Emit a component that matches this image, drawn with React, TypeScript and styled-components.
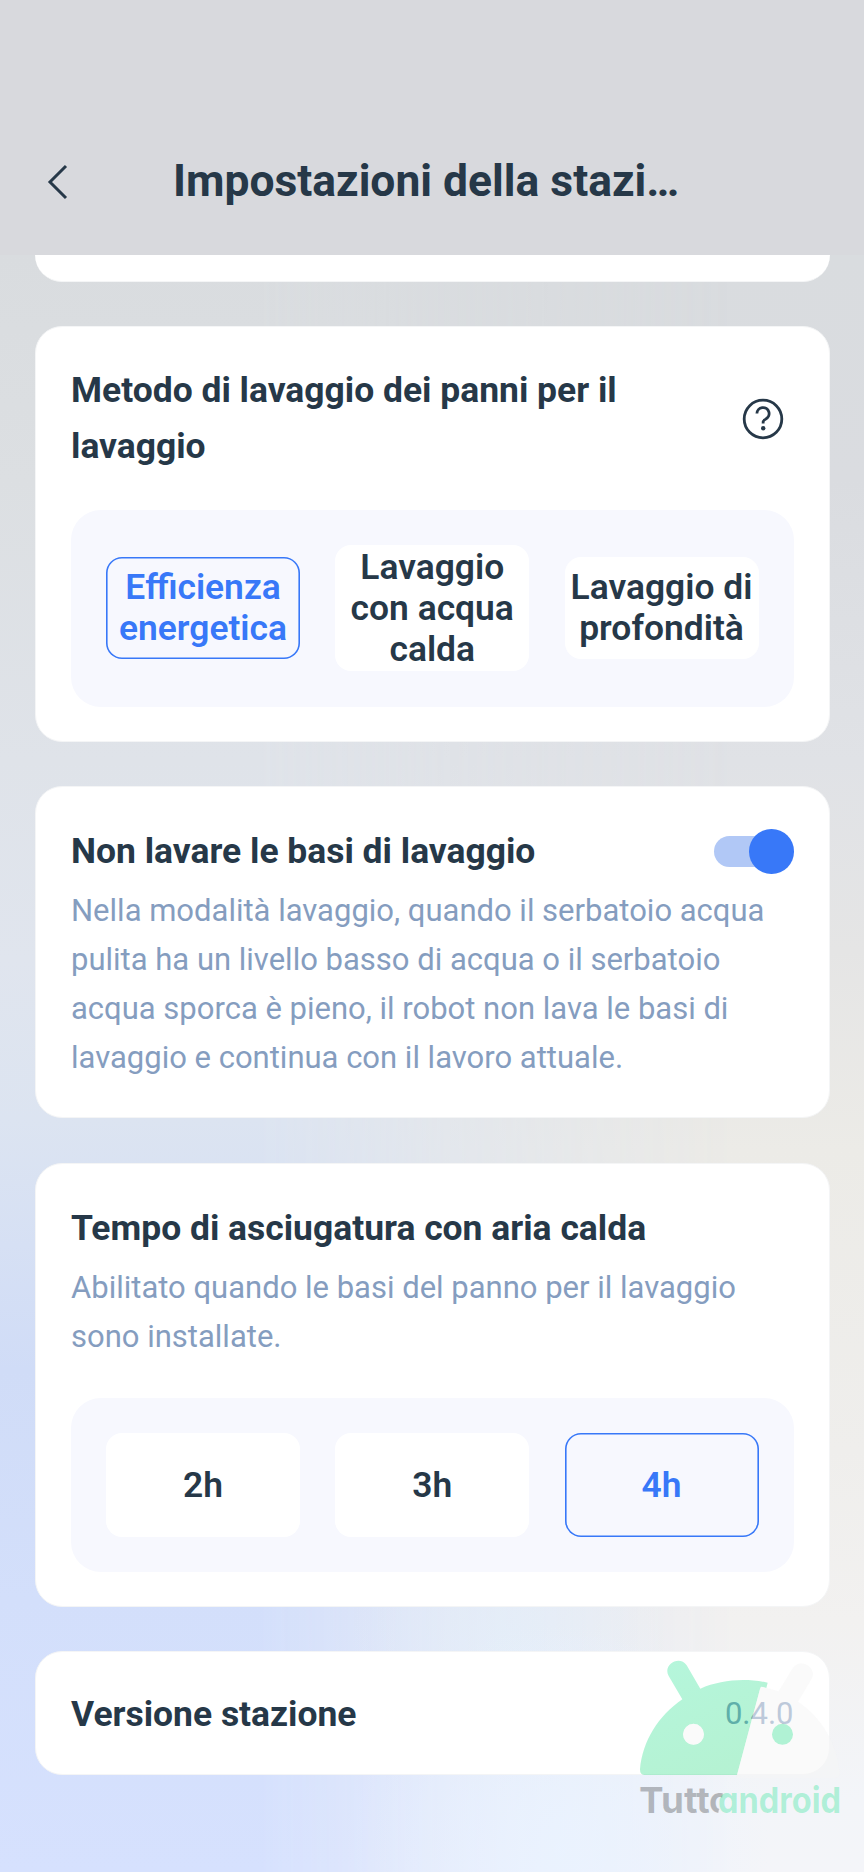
import React from 'react';
import styled, { createGlobalStyle } from 'styled-components';

const ink = '#263848';
const blue = '#3878f8';

const GlobalStyle = createGlobalStyle`
  html, body { margin: 0; padding: 0; }
  body { font-family: Roboto, "Liberation Sans", sans-serif; color: ${ink}; }
  * { box-sizing: border-box; }
`;

const Screen = styled.main`
  position: relative;
  isolation: isolate;
  width: 864px;
  height: 1872px;
  overflow: hidden;
  background: linear-gradient(180deg, #d8d9dc 0, #d9dcdf 255px, #dadce0 480px, #e0e2e6 760px, #e5e5e5 950px, #ecebe7 1150px, #efeeec 1450px, #f2f1f0 1620px, #f3f5f9 1800px, #f4f5f9 1872px);

  &::before {
    content: '';
    position: absolute;
    inset: 0;
    z-index: -1;
    background: linear-gradient(180deg, #d8d9dc 0, #d9dcdf 255px, #dcdfe2 480px, #dfe3e9 760px, #e0e5ee 960px, #dce4f1 1120px, #d0dcf7 1370px, #d3dffb 1600px, #d6e1fe 1872px);
    mask-image: linear-gradient(90deg, #000 0%, #000 30%, rgba(0,0,0,.5) 52%, transparent 85%);
  }

  &::after {
    content: '';
    position: absolute;
    inset: 0;
    z-index: -1;
    background:
      radial-gradient(ellipse 210px 230px at 560px 1850px, rgba(234,243,255,.9), rgba(234,243,255,0)),
      radial-gradient(ellipse 160px 150px at 510px 1640px, rgba(228,239,250,.7), rgba(228,239,250,0));
  }
`;

const Header = styled.header`
  height: 255px;
  padding: 152px 0 0 35px;
  display: flex;
  align-items: flex-start;
  background: #d8d9dd;
`;

const BackButton = styled.button`
  width: 44px;
  height: 44px;
  padding: 0;
  border: 0;
  background: none;
  display: grid;
  place-items: center;
  margin-top: 8px;
`;

const Title = styled.h1`
  margin: -1px 0 0 94px;
  width: 520px;
  font-size: 44.4px;
  line-height: 60px;
  font-weight: 700;
  white-space: nowrap;
`;

const Content = styled.div`
  padding: 0 34.5px 0 35px;
  display: flex;
  flex-direction: column;
`;

const Card = styled.section<{ $height: number; $top?: number }>`
  height: ${p => p.$height}px;
  margin-bottom: 44.3px;
  padding: ${p => p.$top ?? 35}px 35px 0 35px;
  border: 1px solid #f4f5f6;
  border-radius: 27px;
  background: #fff;
`;

const CardTail = styled.div`
  height: 27px;
  margin-bottom: 44px;
  border-radius: 0 0 27px 27px;
  border-bottom: 1px solid #f4f5f6;
  background: #fff;
`;

const Row = styled.div`
  display: flex;
  align-items: center;
  justify-content: space-between;
`;

const Heading = styled.h2`
  margin: 0;
  max-width: 590px;
  font-size: 35.45px;
  line-height: 56px;
  font-weight: 700;
`;

const Description = styled.p`
  margin: 8.5px 0 0;
  font-size: 31px;
  line-height: 48.7px;
  color: #859dbf;
`;

const HelpButton = styled.button`
  width: 42px;
  height: 42px;
  padding: 0;
  margin: 2px 10px 0 0;
  border: 0;
  background: none;
`;

const OptionPanel = styled.div<{ $height: number; $top: number }>`
  height: ${p => p.$height}px;
  margin-top: ${p => p.$top}px;
  padding: 0 35px;
  border-radius: 30px;
  background: #f7f8fe;
  display: grid;
  grid-template-columns: repeat(3, 194px);
  justify-content: space-between;
  align-items: center;
`;

const Option = styled.button<{ $active?: boolean; $height?: number }>`
  height: ${p => p.$height ?? 102}px;
  padding: 0;
  border: 0;
  box-shadow: ${p => (p.$active ? `inset 0 0 0 1.6px ${blue}` : 'none')};
  border-radius: 16px;
  background: ${p => (p.$active ? 'transparent' : '#fff')};
  color: ${p => (p.$active ? blue : ink)};
  font: 600 35.4px/41px Roboto, "Liberation Sans", sans-serif;
  text-align: center;
  white-space: pre;
`;

const Switch = styled.button`
  width: 80px;
  height: 45px;
  padding: 0;
  margin-top: 1px;
  border: 0;
  background: none;
  display: flex;
  align-items: center;
`;

const Track = styled.span`
  width: 66px;
  height: 31px;
  border-radius: 16px;
  background: #b1c8f6;
`;

const Knob = styled.span`
  width: 44.5px;
  height: 44.5px;
  margin-left: -30.5px;
  border-radius: 50%;
  background: ${blue};
`;

const Version = styled.span`
  margin-top: -1px;
  font-size: 31px;
  line-height: 40px;
  color: #859dbf;
`;

const Watermark = styled.svg`
  position: absolute;
  left: 600px;
  top: 1620px;
  width: 264px;
  height: 252px;
  pointer-events: none;
`;

const Wordmark = styled.text`
  font: 700 106px Inter, Lato, sans-serif;
  font-feature-settings: 'cv11' 1;
`;

const BackIcon = () => (
  <svg width="44" height="44" viewBox="0 0 44 44" fill="none" stroke={ink} strokeWidth="3">
    <path d="M31 6 15 22 31 38" />
  </svg>
);

const HelpIcon = () => (
  <svg width="42" height="42" viewBox="0 0 42 42" fill="none" stroke={ink} strokeWidth="2.8">
    <circle cx="21" cy="21" r="18.8" />
    <path d="M14.900 15.600a6.100 6.100 0 1 1 8.600 5.600C21.800 21.900 21.100 22.400 21.100 25.400" />
    <circle cx="21.200" cy="30.300" r="2.200" fill={ink} stroke="none" />
  </svg>
);

const TuttoAndroid = () => (
  <Watermark viewBox="0 0 792 756">
    <defs>
      <linearGradient id="mint" x1="0" y1="0" x2="0.5" y2="1">
        <stop offset="0" stopColor="#08e28a" />
        <stop offset="1" stopColor="#08d46c" />
      </linearGradient>
      <linearGradient id="greyCut" gradientUnits="userSpaceOnUse" x1="360" y1="548" x2="364" y2="549">
        <stop offset="0" stopColor="#000" stopOpacity=".26" />
        <stop offset="1" stopColor="#000" stopOpacity="0" />
      </linearGradient>
    </defs>
    <path
      opacity=".3"
      fill="url(#mint)"
      fillRule="evenodd"
      d="M247 238 206 168C187 135 238 103 260 136L301 206C361 180 433 173 503 188L499 204 485 200Q482 200 480 207L411 465H133Q120 465 120 448C128 363 174 288 247 238ZM312 343A31.500 31.500 0 1 0 249 343A31.500 31.500 0 1 0 312 343Z"
    />
    <circle cx="280.500" cy="343" r="31.500" fill="#f5f5f5" opacity=".45" />
    <path
      opacity=".5"
      fill="#f5f5f5"
      fillRule="evenodd"
      d="M480 207Q482 200 485 200L536 214 577 146C600 110 655 143 634 178L594 245C664 292 709 365 719 457Q720 474 705 474H409L411 465ZM579 343A31.500 31.500 0 1 0 516 343A31.500 31.500 0 1 0 579 343Z"
    />
    <circle cx="547.500" cy="343" r="31.500" fill="#08d879" opacity=".32" />
    <Wordmark y="580">
      <tspan x="117" fill="#000" fillOpacity=".26" textLength="212" lengthAdjust="spacingAndGlyphs">Tutt</tspan>
      <tspan x="327" fill="url(#greyCut)">o</tspan>
      <tspan x="354" fill="#08e285" fillOpacity=".3" textLength="369" lengthAdjust="spacingAndGlyphs">android</tspan>
    </Wordmark>
  </Watermark>
);

export default function App() {
  return (
    <>
      <GlobalStyle />
      <Screen>
        <Header>
          <BackButton aria-label="Indietro"><BackIcon /></BackButton>
          <Title>Impostazioni della stazi…</Title>
        </Header>
        <Content>
          <CardTail />
          <Card $height={415.7}>
            <Row>
              <Heading>Metodo di lavaggio dei panni per il lavaggio</Heading>
              <HelpButton aria-label="Aiuto"><HelpIcon /></HelpButton>
            </Row>
            <OptionPanel $height={196.5} $top={36}>
              <Option $active>{'Efficienza\nenergetica'}</Option>
              <Option $height={126}>{'Lavaggio\ncon acqua\ncalda'}</Option>
              <Option>{'Lavaggio di\nprofondità'}</Option>
            </OptionPanel>
          </Card>
          <Card $height={332.3} $top={36}>
            <Row>
              <Heading>Non lavare le basi di lavaggio</Heading>
              <Switch role="switch" aria-checked="true" aria-label="Non lavare le basi di lavaggio"><Track /><Knob /></Switch>
            </Row>
            <Description>Nella modalità lavaggio, quando il serbatoio acqua pulita ha un livello basso di acqua o il serbatoio acqua sporca è pieno, il robot non lava le basi di lavaggio e continua con il lavoro attuale.</Description>
          </Card>
          <Card $height={444.2} $top={36}>
            <Heading>Tempo di asciugatura con aria calda</Heading>
            <Description>Abilitato quando le basi del panno per il lavaggio sono installate.</Description>
            <OptionPanel $height={174.3} $top={36.5}>
              <Option $height={103.5}>2h</Option>
              <Option $height={103.5}>3h</Option>
              <Option $active $height={103.5}>4h</Option>
            </OptionPanel>
          </Card>
          <Card $height={124} $top={34}>
            <Row>
              <Heading>Versione stazione</Heading>
              <Version>0.4.0</Version>
            </Row>
          </Card>
        </Content>
        <TuttoAndroid />
      </Screen>
    </>
  );
}
